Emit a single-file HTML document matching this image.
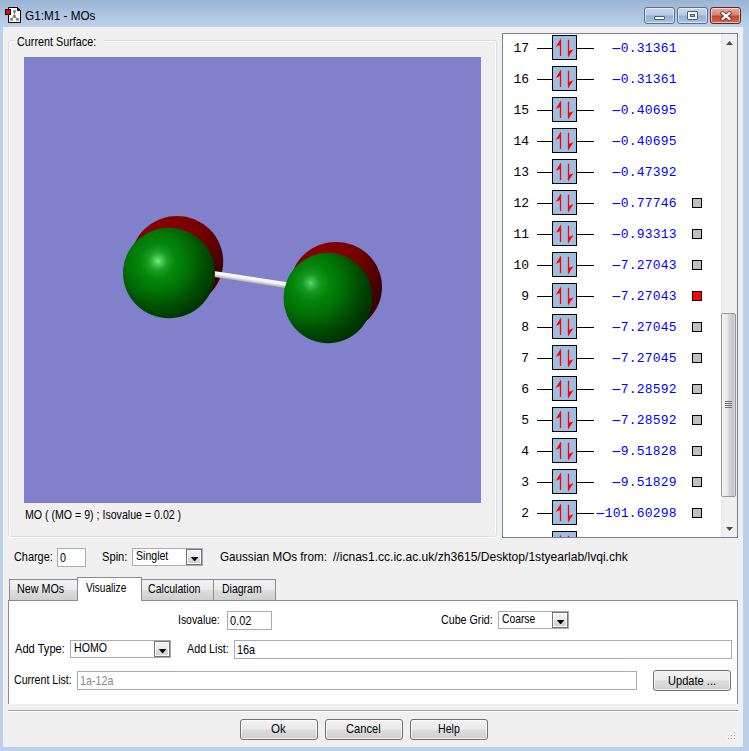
<!DOCTYPE html>
<html><head><meta charset="utf-8"><title>G1:M1 - MOs</title>
<style>
*{box-sizing:border-box;margin:0;padding:0}
html,body{width:749px;height:751px;overflow:hidden;background:#b9d1ea}
body{position:relative;font-family:'Liberation Sans', sans-serif;font-size:11.5px}
.abs{position:absolute}
.tx{position:absolute;white-space:nowrap;line-height:16px;height:16px;transform-origin:0 0;z-index:5}
#frame{position:absolute;left:0;top:0;width:749px;height:751px;background:linear-gradient(#99b4d3 0px,#a7c0dc 10px,#bdd2e9 27px,#b9d1ea 28px,#b9d1ea 100%)}
#client{position:absolute;left:3px;top:27px;width:740px;height:720px;background:#f0f0f0}
.wb{position:absolute;top:7px;height:17px;border:1px solid #5a6f8c;border-radius:3px;box-shadow:inset 0 0 0 1px rgba(255,255,255,.55);background:linear-gradient(#c9d9ec 0,#b4c8e2 48%,#95b0d2 52%,#a9c2e0 100%)}
#bclose{background:linear-gradient(#e9a99b 0,#d98271 48%,#c4452c 52%,#d4694f 100%);border-color:#5c2a26}
.gb{position:absolute;border:1px solid #d5dfe5;border-radius:3px;box-shadow:inset 1px 1px 0 #fff,inset -1px 0 0 #fff,0 1px 0 #fff}
#view{position:absolute;left:24px;top:57px;width:457px;height:446px;background:#8080cb}
#list{position:absolute;left:502px;top:33px;width:236px;height:505px;background:#fff;border:1px solid #7b8291;overflow:hidden}
.row{position:absolute;left:0;width:220px;height:25px;font-family:'Liberation Mono', monospace;font-size:13px;line-height:25px}
.num{position:absolute;left:2.600px;width:23.6px;text-align:right;top:0.5px;color:#000;letter-spacing:0.1px}
.ln{position:absolute;left:34px;top:13px;width:57px;height:1px;background:#000}
.bx{position:absolute;left:49px;top:0;width:25px;height:25px;border:1px solid #000;background:#a0bee0}
.bx svg{display:block}
.en{position:absolute;right:46.300px;top:0.5px;color:#0000ff;letter-spacing:0.2px;white-space:pre}
.sq{position:absolute;left:189px;top:8px;width:10px;height:10px;border:1px solid #000}
#sb{position:absolute;left:721px;top:34px;width:16px;height:503px;background:linear-gradient(90deg,#e8e8e8 0,#f0f0f0 3px,#f0f0f0 100%)}
#thumb{position:absolute;left:0px;top:279px;width:15px;height:184px;border:1px solid #979797;border-radius:2px;background:linear-gradient(90deg,#f4f4f4 0,#e8e8ea 45%,#d6d6d9 52%,#c6c6ca 86%,#d8d8da 100%)}
.inp{position:absolute;background:#fff;border:1px solid #a9acb6}
.cmb{position:absolute;background:#fff;border:1px solid #a9acb6}
.dd{position:absolute;top:0;right:0;bottom:0;width:16px;border:1px solid #737373;box-shadow:inset 0 0 0 1px #fff;background:linear-gradient(#f4f4f4 0,#ebebeb 50%,#dcdcdc 51%,#d2d2d2 100%)}
.dd:after{content:"";position:absolute;left:3.800px;top:6.900px;width:7.600px;height:4.500px;background:#000;clip-path:polygon(0 0,100% 0,50% 100%)}
.btn{position:absolute;border:1px solid #707070;border-radius:3px;box-shadow:inset 0 0 0 1px rgba(255,255,255,.7);background:linear-gradient(#f2f2f2 0,#ebebeb 48%,#dddddd 52%,#cfcfcf 100%)}
.tab{position:absolute;top:579px;height:21px;border:1px solid #898c95;border-bottom:none;background:linear-gradient(#f2f2f2 0,#ebebeb 48%,#dddddd 52%,#cfcfcf 100%)}
#tabsel{top:577px;height:24px;background:#fff;z-index:3}
#pane{position:absolute;left:8px;top:600px;width:730px;height:104px;background:#fff;border:1px solid #898c95;border-bottom:none}
.mi{display:inline-block;transform:scaleX(2.200);transform-origin:54% 50%;font-style:normal;font-weight:normal}
</style></head><body>
<div id="frame"></div>
<svg class="abs" style="left:5px;top:7px" width="17" height="17" viewBox="0 0 17 17">
<path d="M3.500 0.500H12.500L15.500 3.500V15.500H3.500Z" fill="#fff" stroke="#000"/>
<path d="M12.500 0.500V3.500H15.500" fill="none" stroke="#000"/>
<rect x="13" y="2" width="1.200" height="1.200" fill="#f00"/>
<rect x="0.500" y="2.500" width="5" height="5" fill="#f00" stroke="#000"/>
<path d="M9.500 5V9M9.500 9.300L6.500 12.300M9.500 9.300L12.500 12.300" stroke="#909090" stroke-width="1.100" fill="none"/>
<rect x="8.200" y="3.200" width="2.600" height="2.600" fill="#7c7c7c"/><rect x="8.200" y="8.100" width="2.600" height="2.600" fill="#7c7c7c"/><rect x="5.200" y="11.200" width="2.600" height="2.500" fill="#7c7c7c"/><rect x="11.200" y="11.200" width="2.600" height="2.500" fill="#7c7c7c"/>
</svg>
<div class="wb" style="left:644px;width:31px"><i class="abs" style="left:9px;top:8px;width:11px;height:4px;background:#f4f7fb;border:1px solid #4e5d74;border-radius:1px"></i></div>
<div class="wb" style="left:677px;width:31px"><i class="abs" style="left:9px;top:3px;width:11px;height:9px;background:#f4f7fb;border:1px solid #4e5d74;border-radius:1px"></i><i class="abs" style="left:12px;top:6px;width:5px;height:3px;background:#9bb3d3;border:1px solid #4e5d74"></i></div>
<div class="wb" id="bclose" style="left:710px;width:31px"><svg class="abs" style="left:8px;top:3px" width="14" height="10" viewBox="0 0 14 10"><path d="M3.600 2.200L10.400 7.800M10.400 2.200L3.600 7.800" stroke="#5a2f2f" stroke-width="4" stroke-linecap="square"/><path d="M3.600 2.200L10.400 7.800M10.400 2.200L3.600 7.800" stroke="#fff" stroke-width="2.300" stroke-linecap="square"/></svg></div>

<div id="client"></div>
<div class="gb" style="left:8px;top:40px;width:489px;height:497px"></div>
<div class="abs" style="left:15px;top:36px;width:89px;height:12px;background:#f0f0f0"></div>
<div id="view">
<svg width="457" height="446" viewBox="24 57 457 446">
<defs>
<radialGradient id="gL" gradientUnits="userSpaceOnUse" cx="158" cy="261" r="72"><stop offset="0" stop-color="#74ec84"/><stop offset="0.050" stop-color="#4ccc5a"/><stop offset="0.130" stop-color="#1aa026"/><stop offset="0.240" stop-color="#05880c"/><stop offset="0.420" stop-color="#007405"/><stop offset="0.620" stop-color="#005202"/><stop offset="0.820" stop-color="#003600"/><stop offset="1" stop-color="#002800"/></radialGradient>
<radialGradient id="gR" gradientUnits="userSpaceOnUse" cx="311" cy="283" r="76"><stop offset="0" stop-color="#5cda6a"/><stop offset="0.045" stop-color="#3abc48"/><stop offset="0.120" stop-color="#14981e"/><stop offset="0.240" stop-color="#04840a"/><stop offset="0.420" stop-color="#007005"/><stop offset="0.620" stop-color="#004e02"/><stop offset="0.820" stop-color="#003400"/><stop offset="1" stop-color="#002600"/></radialGradient>
<radialGradient id="rL" gradientUnits="userSpaceOnUse" cx="165" cy="228" r="70"><stop offset="0" stop-color="#8a0000"/><stop offset="0.5" stop-color="#760000"/><stop offset="1" stop-color="#3c0000"/></radialGradient>
<radialGradient id="rR" gradientUnits="userSpaceOnUse" cx="322" cy="252" r="70"><stop offset="0" stop-color="#8a0000"/><stop offset="0.5" stop-color="#760000"/><stop offset="1" stop-color="#3c0000"/></radialGradient>
<linearGradient id="bd" x1="0" y1="0" x2="0" y2="1"><stop offset="0" stop-color="#ffffff"/><stop offset="0.5" stop-color="#f0f0f0"/><stop offset="1" stop-color="#a8a8a8"/></linearGradient>
</defs>
<ellipse cx="177" cy="261.500" rx="46.200" ry="45.500" fill="url(#rL)"/>
<ellipse cx="336" cy="287" rx="46" ry="45.100" fill="url(#rR)"/>
<g transform="rotate(8.8 214 274)"><rect x="210" y="271" width="78" height="6" fill="url(#bd)"/></g>
<ellipse cx="169" cy="273" rx="46" ry="45.200" fill="url(#gL)"/>
<ellipse cx="328" cy="298" rx="44.500" ry="45.200" fill="url(#gR)"/>
</svg>
</div>

<div id="list">
<div class="row" style="top:1px"><span class="num">17</span><i class="ln"></i><i class="bx"><svg width="23" height="23" viewBox="0 0 23 23"><path d="M7.500 3.700V20M15.500 3.700V20.200" stroke="#f00" stroke-width="1.300" fill="none"/><path d="M8 2.600L2.800 10.800L8 8.800Z M15 21.400L20.400 13.200L15 15.200Z" fill="#f00"/></svg></i><span class="en"><b class="mi">-</b>0.31361</span></div>
<div class="row" style="top:32px"><span class="num">16</span><i class="ln"></i><i class="bx"><svg width="23" height="23" viewBox="0 0 23 23"><path d="M7.500 3.700V20M15.500 3.700V20.200" stroke="#f00" stroke-width="1.300" fill="none"/><path d="M8 2.600L2.800 10.800L8 8.800Z M15 21.400L20.400 13.200L15 15.200Z" fill="#f00"/></svg></i><span class="en"><b class="mi">-</b>0.31361</span></div>
<div class="row" style="top:63px"><span class="num">15</span><i class="ln"></i><i class="bx"><svg width="23" height="23" viewBox="0 0 23 23"><path d="M7.500 3.700V20M15.500 3.700V20.200" stroke="#f00" stroke-width="1.300" fill="none"/><path d="M8 2.600L2.800 10.800L8 8.800Z M15 21.400L20.400 13.200L15 15.200Z" fill="#f00"/></svg></i><span class="en"><b class="mi">-</b>0.40695</span></div>
<div class="row" style="top:94px"><span class="num">14</span><i class="ln"></i><i class="bx"><svg width="23" height="23" viewBox="0 0 23 23"><path d="M7.500 3.700V20M15.500 3.700V20.200" stroke="#f00" stroke-width="1.300" fill="none"/><path d="M8 2.600L2.800 10.800L8 8.800Z M15 21.400L20.400 13.200L15 15.200Z" fill="#f00"/></svg></i><span class="en"><b class="mi">-</b>0.40695</span></div>
<div class="row" style="top:125px"><span class="num">13</span><i class="ln"></i><i class="bx"><svg width="23" height="23" viewBox="0 0 23 23"><path d="M7.500 3.700V20M15.500 3.700V20.200" stroke="#f00" stroke-width="1.300" fill="none"/><path d="M8 2.600L2.800 10.800L8 8.800Z M15 21.400L20.400 13.200L15 15.200Z" fill="#f00"/></svg></i><span class="en"><b class="mi">-</b>0.47392</span></div>
<div class="row" style="top:156px"><span class="num">12</span><i class="ln"></i><i class="bx"><svg width="23" height="23" viewBox="0 0 23 23"><path d="M7.500 3.700V20M15.500 3.700V20.200" stroke="#f00" stroke-width="1.300" fill="none"/><path d="M8 2.600L2.800 10.800L8 8.800Z M15 21.400L20.400 13.200L15 15.200Z" fill="#f00"/></svg></i><span class="en"><b class="mi">-</b>0.77746</span><i class="sq" style="background:#c0c0c0"></i></div>
<div class="row" style="top:187px"><span class="num">11</span><i class="ln"></i><i class="bx"><svg width="23" height="23" viewBox="0 0 23 23"><path d="M7.500 3.700V20M15.500 3.700V20.200" stroke="#f00" stroke-width="1.300" fill="none"/><path d="M8 2.600L2.800 10.800L8 8.800Z M15 21.400L20.400 13.200L15 15.200Z" fill="#f00"/></svg></i><span class="en"><b class="mi">-</b>0.93313</span><i class="sq" style="background:#c0c0c0"></i></div>
<div class="row" style="top:218px"><span class="num">10</span><i class="ln"></i><i class="bx"><svg width="23" height="23" viewBox="0 0 23 23"><path d="M7.500 3.700V20M15.500 3.700V20.200" stroke="#f00" stroke-width="1.300" fill="none"/><path d="M8 2.600L2.800 10.800L8 8.800Z M15 21.400L20.400 13.200L15 15.200Z" fill="#f00"/></svg></i><span class="en"><b class="mi">-</b>7.27043</span><i class="sq" style="background:#c0c0c0"></i></div>
<div class="row" style="top:249px"><span class="num">9</span><i class="ln"></i><i class="bx"><svg width="23" height="23" viewBox="0 0 23 23"><path d="M7.500 3.700V20M15.500 3.700V20.200" stroke="#f00" stroke-width="1.300" fill="none"/><path d="M8 2.600L2.800 10.800L8 8.800Z M15 21.400L20.400 13.200L15 15.200Z" fill="#f00"/></svg></i><span class="en"><b class="mi">-</b>7.27043</span><i class="sq" style="background:#ff0000"></i></div>
<div class="row" style="top:280px"><span class="num">8</span><i class="ln"></i><i class="bx"><svg width="23" height="23" viewBox="0 0 23 23"><path d="M7.500 3.700V20M15.500 3.700V20.200" stroke="#f00" stroke-width="1.300" fill="none"/><path d="M8 2.600L2.800 10.800L8 8.800Z M15 21.400L20.400 13.200L15 15.200Z" fill="#f00"/></svg></i><span class="en"><b class="mi">-</b>7.27045</span><i class="sq" style="background:#c0c0c0"></i></div>
<div class="row" style="top:311px"><span class="num">7</span><i class="ln"></i><i class="bx"><svg width="23" height="23" viewBox="0 0 23 23"><path d="M7.500 3.700V20M15.500 3.700V20.200" stroke="#f00" stroke-width="1.300" fill="none"/><path d="M8 2.600L2.800 10.800L8 8.800Z M15 21.400L20.400 13.200L15 15.200Z" fill="#f00"/></svg></i><span class="en"><b class="mi">-</b>7.27045</span><i class="sq" style="background:#c0c0c0"></i></div>
<div class="row" style="top:342px"><span class="num">6</span><i class="ln"></i><i class="bx"><svg width="23" height="23" viewBox="0 0 23 23"><path d="M7.500 3.700V20M15.500 3.700V20.200" stroke="#f00" stroke-width="1.300" fill="none"/><path d="M8 2.600L2.800 10.800L8 8.800Z M15 21.400L20.400 13.200L15 15.200Z" fill="#f00"/></svg></i><span class="en"><b class="mi">-</b>7.28592</span><i class="sq" style="background:#c0c0c0"></i></div>
<div class="row" style="top:373px"><span class="num">5</span><i class="ln"></i><i class="bx"><svg width="23" height="23" viewBox="0 0 23 23"><path d="M7.500 3.700V20M15.500 3.700V20.200" stroke="#f00" stroke-width="1.300" fill="none"/><path d="M8 2.600L2.800 10.800L8 8.800Z M15 21.400L20.400 13.200L15 15.200Z" fill="#f00"/></svg></i><span class="en"><b class="mi">-</b>7.28592</span><i class="sq" style="background:#c0c0c0"></i></div>
<div class="row" style="top:404px"><span class="num">4</span><i class="ln"></i><i class="bx"><svg width="23" height="23" viewBox="0 0 23 23"><path d="M7.500 3.700V20M15.500 3.700V20.200" stroke="#f00" stroke-width="1.300" fill="none"/><path d="M8 2.600L2.800 10.800L8 8.800Z M15 21.400L20.400 13.200L15 15.200Z" fill="#f00"/></svg></i><span class="en"><b class="mi">-</b>9.51828</span><i class="sq" style="background:#c0c0c0"></i></div>
<div class="row" style="top:435px"><span class="num">3</span><i class="ln"></i><i class="bx"><svg width="23" height="23" viewBox="0 0 23 23"><path d="M7.500 3.700V20M15.500 3.700V20.200" stroke="#f00" stroke-width="1.300" fill="none"/><path d="M8 2.600L2.800 10.800L8 8.800Z M15 21.400L20.400 13.200L15 15.200Z" fill="#f00"/></svg></i><span class="en"><b class="mi">-</b>9.51829</span><i class="sq" style="background:#c0c0c0"></i></div>
<div class="row" style="top:466px"><span class="num">2</span><i class="ln"></i><i class="bx"><svg width="23" height="23" viewBox="0 0 23 23"><path d="M7.500 3.700V20M15.500 3.700V20.200" stroke="#f00" stroke-width="1.300" fill="none"/><path d="M8 2.600L2.800 10.800L8 8.800Z M15 21.400L20.400 13.200L15 15.200Z" fill="#f00"/></svg></i><span class="en"><b class="mi">-</b>101.60298</span><i class="sq" style="background:#c0c0c0"></i></div>
<div class="row" style="top:497px"><span class="num">1</span><i class="ln"></i><i class="bx"><svg width="23" height="23" viewBox="0 0 23 23"><path d="M7.500 3.700V20M15.500 3.700V20.200" stroke="#f00" stroke-width="1.300" fill="none"/><path d="M8 2.600L2.800 10.800L8 8.800Z M15 21.400L20.400 13.200L15 15.200Z" fill="#f00"/></svg></i><span class="en"><b class="mi">-</b>101.60299</span><i class="sq" style="background:#c0c0c0"></i></div>
</div>
<div id="sb">
<svg class="abs" style="left:5px;top:7px" width="7" height="4" viewBox="0 0 7 4"><path d="M0 4L3.500 0L7 4Z" fill="#4a4a4a"/></svg>
<div id="thumb"><svg class="abs" style="left:3px;top:87px" width="7" height="8" viewBox="0 0 7 8"><path d="M0 0.500H7M0 2.500H7M0 4.500H7M0 6.500H7" stroke="#6f6f6f" stroke-width="1"/></svg></div>
<svg class="abs" style="left:5px;top:493px" width="7" height="4" viewBox="0 0 7 4"><path d="M0 0L3.500 4L7 0Z" fill="#4a4a4a"/></svg>
</div>

<div class="inp" style="left:57px;top:548px;width:29px;height:19px"></div>
<div class="cmb" style="left:132px;top:548px;width:71px;height:18px"><i class="dd"></i></div>

<div id="pane"></div>
<div class="tab" style="left:9px;width:69px"></div>
<div class="tab" style="left:141px;width:73px"></div>
<div class="tab" style="left:213px;width:63px"></div>
<div class="tab" id="tabsel" style="left:77px;width:65px"></div>

<div class="inp" style="left:227px;top:611px;width:45px;height:19px"></div>
<div class="cmb" style="left:498px;top:611px;width:71px;height:18px"><i class="dd"></i></div>
<div class="cmb" style="left:70px;top:640px;width:101px;height:18px"><i class="dd"></i></div>
<div class="inp" style="left:234px;top:640px;width:498px;height:19px"></div>
<div class="inp" style="left:77px;top:671px;width:560px;height:19px"></div>
<div class="btn" style="left:653px;top:670px;width:78px;height:21px"></div>

<div class="abs" style="left:8px;top:710px;width:730px;height:1px;background:#a0a0a0"></div>
<div class="abs" style="left:8px;top:711px;width:730px;height:1px;background:#fff"></div>
<div class="btn" style="left:240px;top:719px;width:78px;height:21px"></div>
<div class="btn" style="left:325px;top:719px;width:78px;height:21px"></div>
<div class="btn" style="left:410px;top:719px;width:78px;height:21px"></div>
<svg class="abs" style="left:727px;top:731px" width="9" height="9" viewBox="0 0 9 9"><path d="M6 0h1v1h-1zM3 3h1v1h-1zM6 3h1v1h-1zM0 6h1v1h-1zM3 6h1v1h-1zM6 6h1v1h-1z" fill="#fff"/><path d="M7 1h1v1h-1zM4 4h1v1h-1zM7 4h1v1h-1zM1 7h1v1h-1zM4 7h1v1h-1zM7 7h1v1h-1z" fill="#a0a0a0"/></svg>

<span id="t_title" class="tx" style="left:24.89px;top:8.14px;font-size:12.3px;color:#000;font-family:'Liberation Sans', sans-serif;transform:scaleX(0.9542)">G1:M1 - MOs</span>
<span id="t_cs" class="tx" style="left:17.12px;top:33.57px;font-size:12.2px;color:#000;font-family:'Liberation Sans', sans-serif;transform:scaleX(0.8860)">Current Surface:</span>
<span id="t_mo" class="tx" style="left:24.82px;top:506.87px;font-size:12.2px;color:#000;font-family:'Liberation Sans', sans-serif;transform:scaleX(0.8700)">MO ( (MO = 9) ; Isovalue = 0.02 )</span>
<span id="t_charge" class="tx" style="left:13.50px;top:548.87px;font-size:12.2px;color:#000;font-family:'Liberation Sans', sans-serif;transform:scaleX(0.8936)">Charge:</span>
<span id="t_chv" class="tx" style="left:60.34px;top:549.77px;font-size:12.2px;color:#000;font-family:'Liberation Sans', sans-serif;transform:scaleX(0.8871)">0</span>
<span id="t_spin" class="tx" style="left:101.79px;top:548.77px;font-size:12.2px;color:#000;font-family:'Liberation Sans', sans-serif;transform:scaleX(0.9141)">Spin:</span>
<span id="t_singlet" class="tx" style="left:136.34px;top:547.57px;font-size:12.2px;color:#000;font-family:'Liberation Sans', sans-serif;transform:scaleX(0.8669)">Singlet</span>
<span id="t_gm" class="tx" style="left:219.98px;top:548.66px;font-size:12.8px;color:#000;font-family:'Liberation Sans', sans-serif;transform:scaleX(0.9111)">Gaussian MOs from:</span>
<span id="t_path" class="tx" style="left:333.12px;top:548.66px;font-size:12.8px;color:#000;font-family:'Liberation Sans', sans-serif;transform:scaleX(0.9439)">//icnas1.cc.ic.ac.uk/zh3615/Desktop/1styearlab/lvqi.chk</span>
<span id="t_tab1" class="tx" style="left:16.56px;top:580.67px;font-size:12.2px;color:#000;font-family:'Liberation Sans', sans-serif;transform:scaleX(0.8823)">New MOs</span>
<span id="t_tab2" class="tx" style="left:86.39px;top:579.87px;font-size:12.2px;color:#000;font-family:'Liberation Sans', sans-serif;transform:scaleX(0.8301)">Visualize</span>
<span id="t_tab3" class="tx" style="left:148.37px;top:580.67px;font-size:12.2px;color:#000;font-family:'Liberation Sans', sans-serif;transform:scaleX(0.8694)">Calculation</span>
<span id="t_tab4" class="tx" style="left:221.80px;top:580.67px;font-size:12.2px;color:#000;font-family:'Liberation Sans', sans-serif;transform:scaleX(0.8607)">Diagram</span>
<span id="t_iso" class="tx" style="left:177.90px;top:611.77px;font-size:12.2px;color:#000;font-family:'Liberation Sans', sans-serif;transform:scaleX(0.8552)">Isovalue:</span>
<span id="t_isov" class="tx" style="left:229.56px;top:612.97px;font-size:12.2px;color:#000;font-family:'Liberation Sans', sans-serif;transform:scaleX(0.9008)">0.02</span>
<span id="t_cg" class="tx" style="left:441.12px;top:611.77px;font-size:12.2px;color:#000;font-family:'Liberation Sans', sans-serif;transform:scaleX(0.8775)">Cube Grid:</span>
<span id="t_coarse" class="tx" style="left:501.77px;top:610.57px;font-size:12.2px;color:#000;font-family:'Liberation Sans', sans-serif;transform:scaleX(0.8468)">Coarse</span>
<span id="t_at" class="tx" style="left:14.66px;top:640.67px;font-size:12.2px;color:#000;font-family:'Liberation Sans', sans-serif;transform:scaleX(0.9130)">Add Type:</span>
<span id="t_homo" class="tx" style="left:74.47px;top:639.87px;font-size:12.2px;color:#000;font-family:'Liberation Sans', sans-serif;transform:scaleX(0.8696)">HOMO</span>
<span id="t_al" class="tx" style="left:186.50px;top:640.67px;font-size:12.2px;color:#000;font-family:'Liberation Sans', sans-serif;transform:scaleX(0.8808)">Add List:</span>
<span id="t_alv" class="tx" style="left:236.54px;top:641.67px;font-size:12.2px;color:#000;font-family:'Liberation Sans', sans-serif;transform:scaleX(0.8934)">16a</span>
<span id="t_cl" class="tx" style="left:14.15px;top:671.87px;font-size:12.2px;color:#000;font-family:'Liberation Sans', sans-serif;transform:scaleX(0.8694)">Current List:</span>
<span id="t_clv" class="tx" style="left:79.80px;top:673.07px;font-size:12.2px;color:#8a8a8a;font-family:'Liberation Sans', sans-serif;transform:scaleX(0.8787)">1a-12a</span>
<span id="t_upd" class="tx" style="left:668.17px;top:672.77px;font-size:12.2px;color:#000;font-family:'Liberation Sans', sans-serif;transform:scaleX(0.9091)">Update ...</span>
<span id="t_ok" class="tx" style="left:271.26px;top:720.77px;font-size:12.2px;color:#000;font-family:'Liberation Sans', sans-serif;transform:scaleX(0.9462)">Ok</span>
<span id="t_cancel" class="tx" style="left:345.60px;top:720.77px;font-size:12.2px;color:#000;font-family:'Liberation Sans', sans-serif;transform:scaleX(0.9133)">Cancel</span>
<span id="t_help" class="tx" style="left:437.87px;top:720.77px;font-size:12.2px;color:#000;font-family:'Liberation Sans', sans-serif;transform:scaleX(0.8681)">Help</span>
</body></html>
